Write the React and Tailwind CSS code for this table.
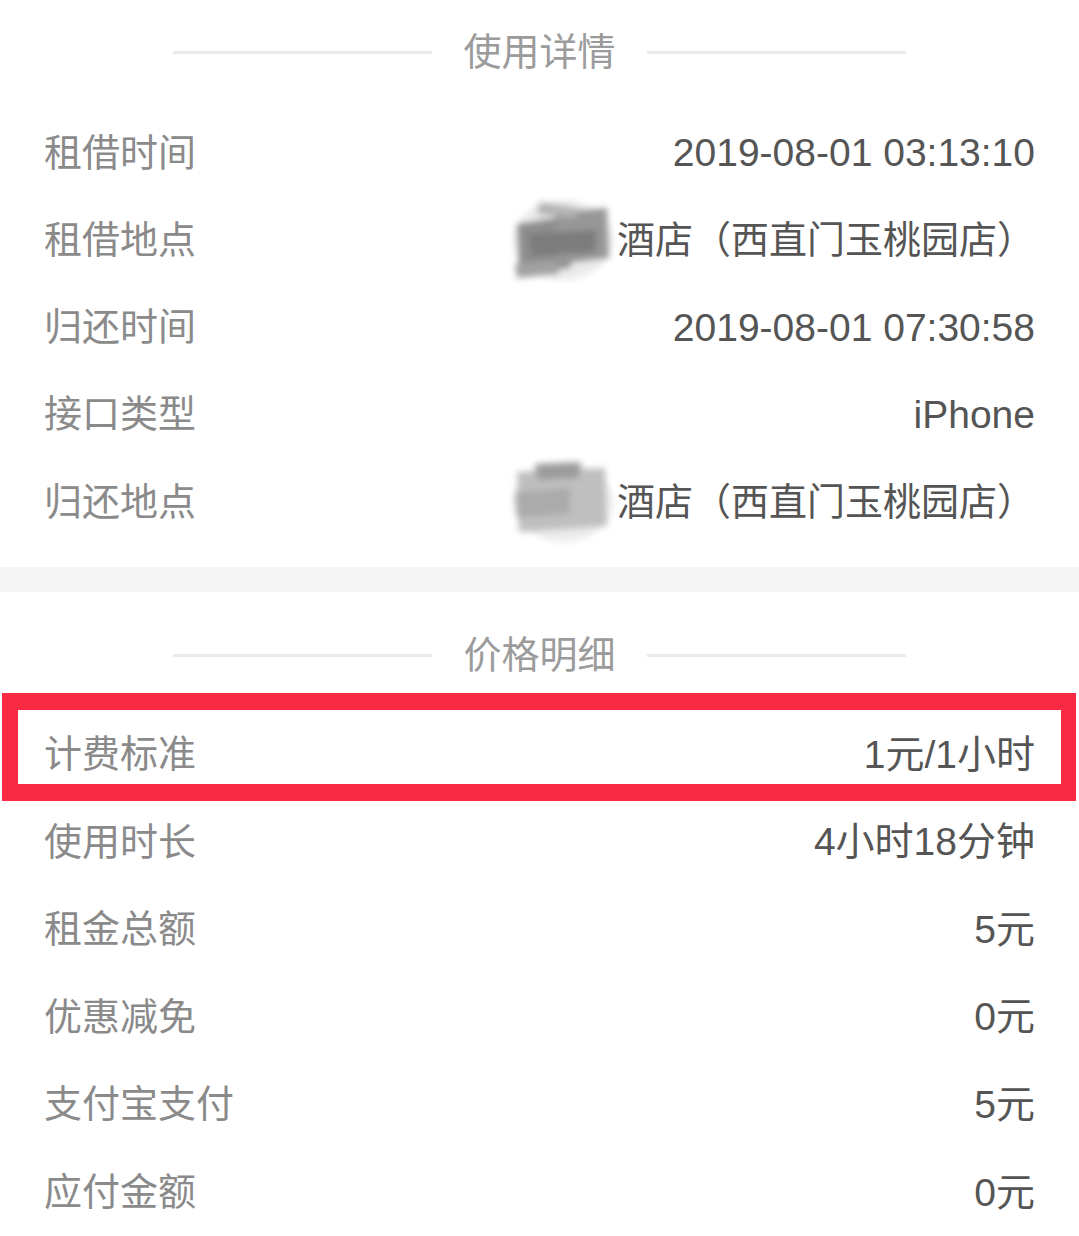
const font = { fontFamily: '"Liberation Sans", "Noto Sans CJK SC", sans-serif' };

const usage = [
  { label: "租借时间", value: "2019-08-01 03:13:10" },
  { label: "租借地点", value: "酒店（西直门玉桃园店）", smudge: "dark" },
  { label: "归还时间", value: "2019-08-01 07:30:58" },
  { label: "接口类型", value: "iPhone" },
  { label: "归还地点", value: "酒店（西直门玉桃园店）", smudge: "light" },
];

const price = [
  { label: "计费标准", value: "1元/1小时", marked: true },
  { label: "使用时长", value: "4小时18分钟" },
  { label: "租金总额", value: "5元" },
  { label: "优惠减免", value: "0元" },
  { label: "支付宝支付", value: "5元" },
  { label: "应付金额", value: "0元" },
];

/* scribbled-out shop name */
function Smudge({ tone }) {
  const dark = tone === "dark";
  const id = "blur-" + tone;
  return (
    <svg width="108" height="92" viewBox="0 0 108 92" className="shrink-0 -my-[26px]">
      <defs>
        <filter id={id} x="-20%" y="-20%" width="140%" height="140%">
          <feGaussianBlur stdDeviation="3" />
        </filter>
      </defs>
      <g filter={`url(#${id})`}>
        <ellipse cx="54" cy="46" rx="50" ry="40" fill="#e3e3e3" opacity="0.7" />
        {dark ? (
          <>
            <path d="M8 30 L58 22 L62 74 L10 78 Z" fill="#8e8e8e" />
            <path d="M46 18 L98 14 L100 64 L50 70 Z" fill="#979797" />
            <path d="M20 40 L88 36 L86 58 L22 62 Z" fill="#7b7b7b" />
            <path d="M30 8 L70 14 L66 24 L28 20 Z" fill="#b4b4b4" />
            <path d="M6 70 L48 66 L50 80 L8 84 Z" fill="#a2a2a2" />
          </>
        ) : (
          <>
            <path d="M8 16 L96 12 L98 70 L10 76 Z" fill="#bfbfbf" />
            <path d="M26 8 L72 6 L70 22 L28 24 Z" fill="#9c9c9c" />
            <path d="M6 36 L62 32 L60 58 L8 62 Z" fill="#ababab" />
          </>
        )}
      </g>
    </svg>
  );
}

function SectionTitle({ children }) {
  return (
    <div className="flex items-center justify-center h-[50px]">
      <div className="w-[259px] h-[3px] bg-[#ebebeb]" />
      <span className="mx-[31px] text-[38px] leading-none text-[#9b9b9b]">{children}</span>
      <div className="w-[259px] h-[3px] bg-[#ebebeb]" />
    </div>
  );
}

function Row({ label, value, smudge, marked, h }) {
  return (
    <div className={"relative flex items-center justify-between pl-[44px] pr-[44px] " + h}>
      <span className="text-[38px] leading-none text-[#8a8a8a]">{label}</span>
      <span
        className={
          "flex items-center leading-none text-[#555] " +
          (smudge ? "text-[38px]" : "text-[39px]")
        }
      >
        {smudge && <Smudge tone={smudge} />}
        {value}
      </span>
      {marked && (
        <div className="absolute left-[2px] right-[3px] top-[-17px] bottom-[-3px] border-[17px] border-[#fb2a43] border-l-[16px] border-r-[15px] pointer-events-none" />
      )}
    </div>
  );
}

export default function App() {
  return (
    <div className="w-[1079px] h-[1236px] overflow-hidden bg-white" style={font}>
      {/* ── 使用详情 ── */}
      <section className="pt-[27px] pb-[22px]">
        <SectionTitle>使用详情</SectionTitle>
        <div className="mt-[32px]">
          {usage.map((r) => (
            <Row key={r.label} {...r} h="h-[87.25px]" />
          ))}
        </div>
      </section>

      <div className="h-[25px] bg-[#f5f5f5]" />

      {/* ── 价格明细 ── */}
      <section className="pt-[38px]">
        <SectionTitle>价格明细</SectionTitle>
        <div className="mt-[30px]">
          {price.map((r) => (
            <Row key={r.label} {...r} h="h-[87.6px]" />
          ))}
        </div>
      </section>
    </div>
  );
}
